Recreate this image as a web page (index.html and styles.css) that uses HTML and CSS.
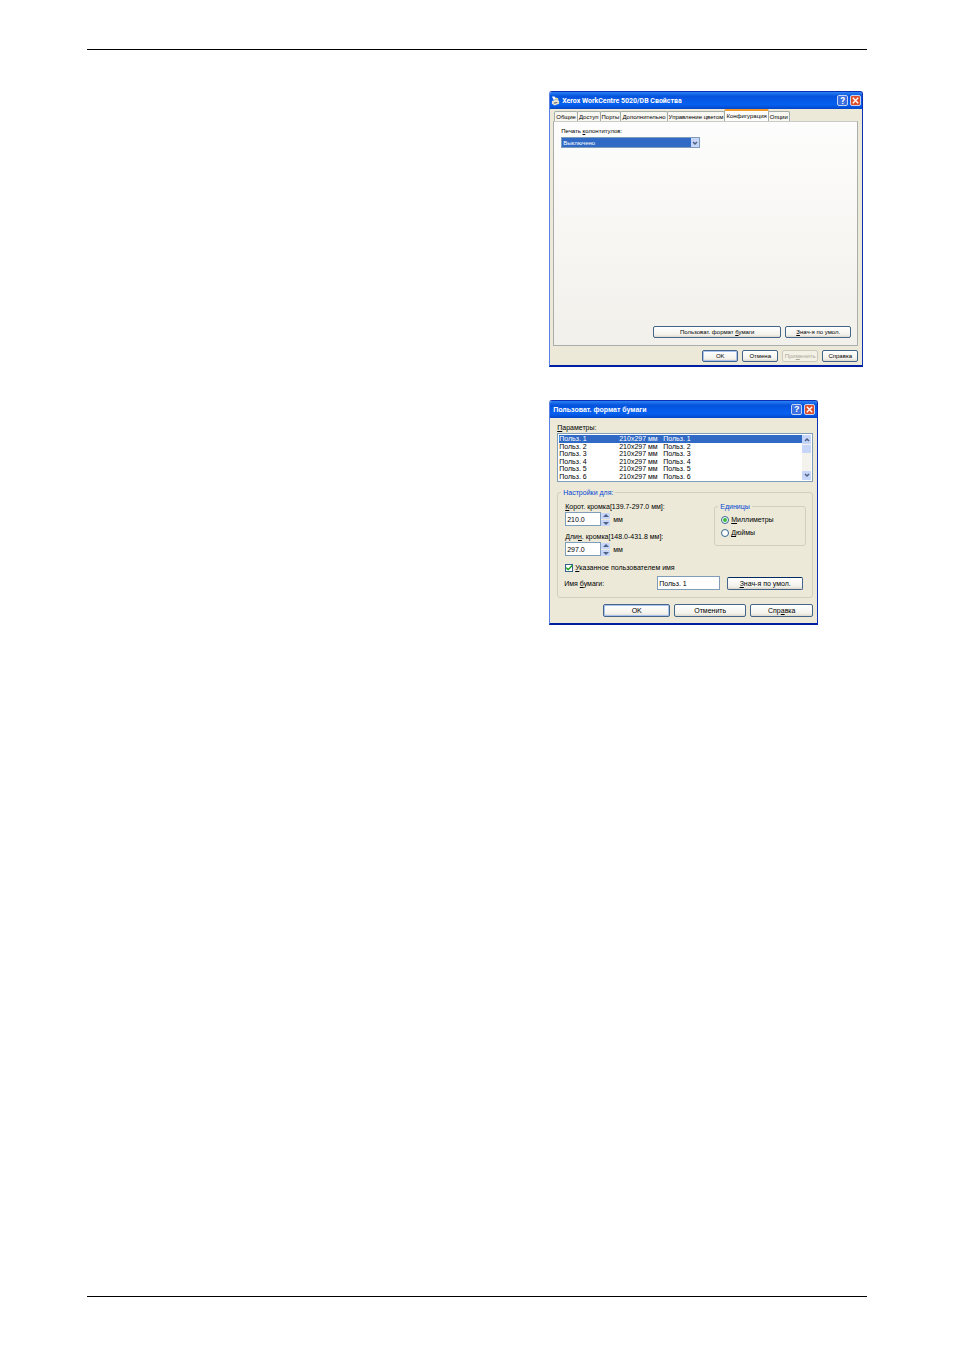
FILE: index.html
```html
<!DOCTYPE html>
<html lang="ru">
<head>
    <meta charset="UTF-8">
    <meta name="viewport" content="width=device-width, initial-scale=1.0">
    <title>Xerox WorkCentre 5020/DB</title>
    <link rel="stylesheet" href="styles.css">
</head>
<body>
    <main class="sheet">
        <div class="figures">

            <!-- Printer properties -->
            <section class="dialog dialog-props">
                <header class="titlebar">
                    <svg class="title-icon" viewBox="0 0 10 10" aria-hidden="true">
                        <path d="M1 0l3 0 2 3-3 1z" fill="#fff"/>
                        <path d="M1 5l6-2 2 2v3l-5 2-3-2z" fill="#e6e2d2"/>
                        <path d="M3 7l4-1v1L4 8z" fill="#556"/>
                        <path d="M5 1l3 1v2L5 3z" fill="#f2e08b"/>
                    </svg>
                    <h2>Xerox WorkCentre 5020/DB Свойства</h2>
                    <button type="button" class="title-button help" aria-label="Справка">?</button>
                    <button type="button" class="title-button close" aria-label="Закрыть">
                        <svg viewBox="0 0 10 10"><path d="M2 2l6 6M8 2l-6 6" stroke="#fff" stroke-width="1.5"/></svg>
                    </button>
                </header>
                <div class="dialog-body">
                    <nav class="tabs">
                        <button type="button">Общие</button>
                        <button type="button">Доступ</button>
                        <button type="button">Порты</button>
                        <button type="button">Дополнительно</button>
                        <button type="button">Управление цветом</button>
                        <button type="button" class="active">Конфигурация</button>
                        <button type="button">Опции</button>
                    </nav>
                    <div class="tab-panel">
                        <label for="headers">Печать <u>к</u>олонтитулов:</label>
                        <div class="select-box">
                            <select id="headers">
                                <option>Выключено</option>
                            </select>
                            <svg class="select-arrow" viewBox="0 0 8 9" aria-hidden="true"><path d="M2 4l2 2 2-2" fill="none" stroke="#4d6185" stroke-width="1.5"/></svg>
                        </div>
                        <div class="panel-buttons">
                            <button type="button" class="btn btn-paper">Пользоват. формат <u>б</u>умаги</button>
                            <button type="button" class="btn btn-reset"><u>З</u>нач-я по умол.</button>
                        </div>
                    </div>
                    <div class="dialog-buttons">
                        <button type="button" class="btn default">OK</button>
                        <button type="button" class="btn">Отмена</button>
                        <button type="button" class="btn" disabled>При<u>м</u>енить</button>
                        <button type="button" class="btn">Справка</button>
                    </div>
                </div>
            </section>

            <!-- Custom paper size -->
            <section class="dialog dialog-paper">
                <header class="titlebar">
                    <h2>Пользоват. формат бумаги</h2>
                    <button type="button" class="title-button help" aria-label="Справка">?</button>
                    <button type="button" class="title-button close" aria-label="Закрыть">
                        <svg viewBox="0 0 10 10"><path d="M2 2l6 6M8 2l-6 6" stroke="#fff" stroke-width="1.5"/></svg>
                    </button>
                </header>
                <div class="dialog-body">
                    <p class="list-label" id="list-label"><u>П</u>араметры:</p>
                    <div class="list-box">
                        <table aria-labelledby="list-label">
                            <tr class="selected"><td>Польз. 1</td><td>210x297 мм</td><td>Польз. 1</td></tr>
                            <tr><td>Польз. 2</td><td>210x297 мм</td><td>Польз. 2</td></tr>
                            <tr><td>Польз. 3</td><td>210x297 мм</td><td>Польз. 3</td></tr>
                            <tr><td>Польз. 4</td><td>210x297 мм</td><td>Польз. 4</td></tr>
                            <tr><td>Польз. 5</td><td>210x297 мм</td><td>Польз. 5</td></tr>
                            <tr><td>Польз. 6</td><td>210x297 мм</td><td>Польз. 6</td></tr>
                        </table>
                        <div class="scrollbar">
                            <button type="button" aria-label="Вверх"><svg viewBox="0 0 8 9"><path d="M2 6l2-2 2 2" fill="none" stroke="#4d6185" stroke-width="1.5"/></svg></button>
                            <span class="thumb"></span>
                            <button type="button" aria-label="Вниз"><svg viewBox="0 0 8 9"><path d="M2 3l2 2 2-2" fill="none" stroke="#4d6185" stroke-width="1.5"/></svg></button>
                        </div>
                    </div>

                    <fieldset class="settings">
                        <legend>Настройки для:</legend>
                        <div class="settings-top">
                            <div class="sizes">
                                <label for="short-edge"><u>К</u>орот. кромка[139.7-297.0 мм]:</label>
                                <div class="spin-row">
                                    <input type="text" id="short-edge" value="210.0">
                                    <span class="spinner">
                                        <button type="button" aria-label="Больше"><svg viewBox="0 0 8 6"><path d="M1 4l3-3 3 3z" fill="#4d6185"/></svg></button>
                                        <button type="button" aria-label="Меньше"><svg viewBox="0 0 8 6"><path d="M1 2l3 3 3-3z" fill="#4d6185"/></svg></button>
                                    </span>
                                    <span>мм</span>
                                </div>
                                <label for="long-edge">Дли<u>н</u>. кромка[148.0-431.8 мм]:</label>
                                <div class="spin-row">
                                    <input type="text" id="long-edge" value="297.0">
                                    <span class="spinner">
                                        <button type="button" aria-label="Больше"><svg viewBox="0 0 8 6"><path d="M1 4l3-3 3 3z" fill="#4d6185"/></svg></button>
                                        <button type="button" aria-label="Меньше"><svg viewBox="0 0 8 6"><path d="M1 2l3 3 3-3z" fill="#4d6185"/></svg></button>
                                    </span>
                                    <span>мм</span>
                                </div>
                            </div>
                            <fieldset class="units">
                                <legend>Единицы</legend>
                                <label><input type="radio" name="units" checked><span><u>М</u>иллиметры</span></label>
                                <label><input type="radio" name="units"><span><u>Д</u>юймы</span></label>
                            </fieldset>
                        </div>
                        <label class="check"><input type="checkbox" checked><span><u>У</u>казанное пользователем имя</span></label>
                        <div class="name-row">
                            <label for="paper-name">Имя <u>б</u>умаги:</label>
                            <input type="text" id="paper-name" value="Польз. 1">
                            <button type="button" class="btn focused"><u>З</u>нач-я по умол.</button>
                        </div>
                    </fieldset>

                    <div class="dialog-buttons">
                        <button type="button" class="btn default">OK</button>
                        <button type="button" class="btn cancel">Отменить</button>
                        <button type="button" class="btn">Спр<u>а</u>вка</button>
                    </div>
                </div>
            </section>

        </div>
    </main>
</body>
</html>
```
FILE: styles.css
```css
* {
    box-sizing: border-box;
}

body {
    margin: 0;
    padding: 49px 87px 53px;
    min-height: 100vh;
    display: flex;
    background: #fff;
    color: #000;
    font-family: "Liberation Sans", Arial, sans-serif;
}

button,
input,
select {
    font: inherit;
    color: inherit;
    margin: 0;
    padding: 0;
}

.sheet {
    flex: 1;
    border-top: 1px solid #000;
    border-bottom: 1px solid #000;
    display: grid;
    grid-template-columns: 16fr 11fr;
}

.figures {
    grid-column: 2;
    padding-top: 41px;
    display: flex;
    flex-direction: column;
    gap: 33px;
}

/* Windows */
.dialog {
    width: 100%;
    background: #ece9d8;
    border: 1px solid #0b2fb5;
    border-left-color: #5b80e4;
    border-bottom: 2px solid #001ea0;
    border-radius: 3px 3px 0 0;
    display: flex;
    flex-direction: column;
    white-space: nowrap;
}

.dialog-props {
    max-width: 314px;
    font-size: 6px;
    line-height: 8px;
}

.dialog-paper {
    max-width: 269px;
    font-size: 7px;
    line-height: 9px;
}

.titlebar {
    height: 17px;
    padding: 0 2px 0 3px;
    display: flex;
    align-items: center;
    gap: 2px;
    background: linear-gradient(#2a82f5, #0553dd 25%, #0560f0 75%, #0346c8);
    border-radius: 2px 2px 0 0;
    color: #fff;
}

.titlebar h2 {
    flex: 1;
    margin: 0;
    font-size: 7px;
    font-weight: bold;
}

.dialog-props .titlebar {
    padding: 0 1px;
    font-family: Roboto, "Liberation Sans", sans-serif;
}

.title-icon {
    width: 9px;
    height: 10px;
}

.title-button {
    width: 11px;
    height: 11px;
    display: flex;
    align-items: center;
    justify-content: center;
    border: 1px solid #c5d4f5;
    border-radius: 2px;
    background: #3c6fe0;
    font-size: 9px;
    font-weight: bold;
}

.title-button.close {
    background: #dd4f2a;
}

.title-button svg {
    width: 9px;
    height: 9px;
}

.btn {
    height: 12px;
    border: 1px solid #44648a;
    border-radius: 2px;
    background: linear-gradient(#fff, #f3f2ec 75%, #dcd8cc);
    text-align: center;
}

.btn.default {
    box-shadow: inset 0 0 0 1px #a9c2ee;
}

.btn.focused {
    border-top-color: #002a60;
}

.btn:disabled {
    border-color: #cdcabb;
    background: #f3f1e6;
    color: #aca899;
}

.dialog-buttons {
    display: flex;
    justify-content: flex-end;
    gap: 4px;
}

/* Properties window */
.dialog-props .dialog-body {
    padding: 0 4px 3px 3px;
}

.tabs {
    height: 12px;
    padding-left: 1px;
    display: flex;
    align-items: flex-end;
}

.tabs button {
    height: 10px;
    padding: 0 1px;
    border: 1px solid #a5aca8;
    border-bottom: 0;
    border-radius: 2px 2px 0 0;
    background: #f8f7f2;
}

.tabs button + button {
    margin-left: -1px;
}

.tabs .active {
    height: 12px;
    border-top: 2px solid #f09a30;
    background: #fdfdfc;
}

.tab-panel {
    height: 225px;
    padding: 5px 6px 7px 7px;
    display: flex;
    flex-direction: column;
    border: 1px solid #a9adab;
    border-top-color: #c9cbc8;
    background: linear-gradient(#fdfdfd, #f2f0ea);
}

.select-box {
    position: relative;
    width: 48%;
    margin-top: 2px;
}

.select-box select {
    display: block;
    appearance: none;
    width: 100%;
    height: 11px;
    padding: 0 1px;
    border: 1px solid #7f9db9;
    border-radius: 0;
    background: #316ac5;
    color: #fff;
}

.select-arrow {
    position: absolute;
    top: 1px;
    right: 1px;
    width: 8px;
    height: 9px;
    background: #c6d5f8;
    pointer-events: none;
}

.panel-buttons {
    margin-top: auto;
    display: flex;
    justify-content: flex-end;
    gap: 4px;
}

.btn-paper {
    width: 128px;
}

.btn-reset {
    width: 66px;
}

.dialog-props .dialog-buttons {
    padding-top: 4px;
}

.dialog-props .dialog-buttons .btn {
    width: 36px;
}

/* Paper size window */
.dialog-paper .dialog-body {
    padding: 5px 4px 6px 7px;
}

.dialog-paper .btn {
    height: 13px;
}

.list-label {
    margin: 0 0 1px;
}

.list-box {
    display: flex;
    height: 49px;
    padding: 1px;
    border: 1px solid #7f9db9;
    background: #fff;
}

.list-box table {
    flex: 1;
    height: 45px;
    border-collapse: collapse;
    table-layout: fixed;
    line-height: 7px;
}

.list-box td {
    padding: 0;
}

.list-box td:nth-child(1) {
    width: 60px;
}

.list-box td:nth-child(2) {
    width: 44px;
}

.list-box .selected {
    background: #316ac5;
    color: #fff;
}

.scrollbar {
    width: 9px;
    display: flex;
    flex-direction: column;
    background: #f3f2ec;
}

.scrollbar button,
.spinner button {
    display: flex;
    align-items: center;
    justify-content: center;
    border: 0;
    border-radius: 1px;
    background: #c6d5f8;
}

.scrollbar button {
    height: 9px;
}

.scrollbar .thumb {
    height: 8px;
    margin: 1px 0 auto;
    border-radius: 1px;
    background: #c6d5f8;
}

.scrollbar svg {
    width: 8px;
    height: 9px;
}

fieldset {
    min-width: 0;
    margin: 0;
    border: 1px solid #d0d0bf;
    border-radius: 3px;
}

legend {
    padding: 0 2px;
    color: #0046d5;
}

.settings {
    margin-top: 6px;
    padding: 5px 6px 7px;
}

.settings legend {
    margin-left: -3px;
}

.settings-top {
    display: flex;
    justify-content: space-between;
    align-items: flex-start;
}

.sizes label {
    display: block;
    padding-left: 1px;
}

.spin-row {
    display: flex;
    align-items: center;
    margin: 1px 0 6px 1px;
}

.dialog-paper input[type="text"] {
    height: 14px;
    padding: 0 1px;
    border: 1px solid #7f9db9;
    border-radius: 0;
    background: #fff;
}

.spin-row input[type="text"] {
    width: 36px;
}

.spinner {
    display: flex;
    flex-direction: column;
    gap: 1px;
    margin-right: 3px;
}

.spinner button {
    width: 9px;
    height: 6px;
}

.spinner svg {
    width: 8px;
    height: 6px;
}

.units {
    width: 92px;
    padding: 4px 6px 8px;
}

.units label,
.check {
    display: flex;
    align-items: center;
    gap: 2px;
}

.units label + label {
    margin-top: 4px;
}

input[type="radio"],
input[type="checkbox"] {
    appearance: none;
    display: flex;
    align-items: center;
    justify-content: center;
    width: 8px;
    height: 8px;
    border: 1px solid #33658f;
    background: #fff;
}

input[type="radio"] {
    border-radius: 50%;
}

input[type="radio"]:checked::before {
    content: "";
    width: 4px;
    height: 4px;
    border-radius: 50%;
    background: #3cb83c;
}

input[type="checkbox"]:checked::before {
    content: "";
    width: 6px;
    height: 6px;
    background: #21a121;
    clip-path: polygon(0 40%, 35% 65%, 100% 0, 100% 35%, 35% 100%, 0 75%);
}

.check {
    margin: 1px 0 4px 1px;
}

.name-row {
    display: flex;
    align-items: center;
}

.name-row label {
    flex: 1;
}

.name-row input[type="text"] {
    width: 63px;
    margin-right: 7px;
}

.name-row .btn {
    width: 76px;
    margin-right: 3px;
}

.dialog-paper .dialog-buttons {
    padding-top: 6px;
}

.dialog-paper .dialog-buttons .btn {
    width: 63px;
}

.dialog-paper .dialog-buttons .default {
    width: 67px;
}

.dialog-paper .dialog-buttons .cancel {
    width: 72px;
}
```
